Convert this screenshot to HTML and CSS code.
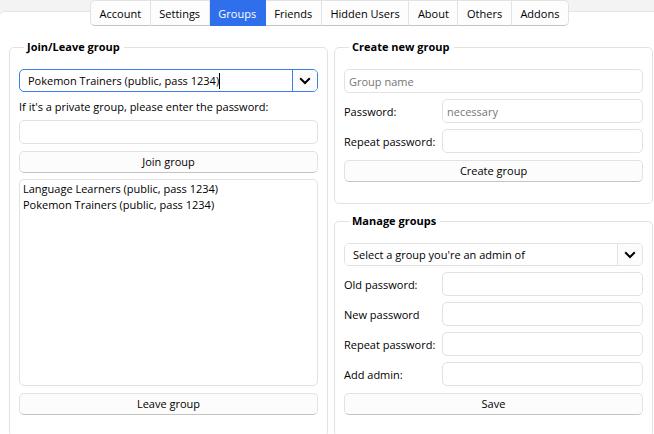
FILE: index.html
```html
<!DOCTYPE html>
<html lang="en">
<head>
<meta charset="utf-8">
<title>Groups</title>
<link rel="stylesheet" href="styles.css">
</head>
<body>
<nav class="tabs">
  <button class="tab" type="button">Account</button>
  <button class="tab" type="button">Settings</button>
  <button class="tab active" type="button">Groups</button>
  <button class="tab" type="button">Friends</button>
  <button class="tab" type="button">Hidden Users</button>
  <button class="tab" type="button">About</button>
  <button class="tab" type="button">Others</button>
  <button class="tab" type="button">Addons</button>
</nav>
<main class="pane">
  <fieldset class="group">
    <legend>Join/Leave group</legend>
    <div class="stack">
      <div class="combo focused">
        <div class="combo-text">
          <input class="combo-input" type="text" value="Pokemon Trainers (public, pass 1234)" aria-label="Group to join">
          <span class="caret"></span>
        </div>
        <button class="combo-arrow" type="button" aria-label="Show groups">
          <svg viewBox="0 0 12 8" width="12" height="8"><path d="M1.200 1.300 6 6l4.800-4.700"/></svg>
        </button>
      </div>
      <label for="join-pass">If it's a private group, please enter the password:</label>
      <input class="field" id="join-pass" type="text">
      <button class="push" type="button">Join group</button>
      <ul class="list">
        <li>Language Learners (public, pass 1234)</li>
        <li>Pokemon Trainers (public, pass 1234)</li>
      </ul>
      <button class="push" type="button">Leave group</button>
    </div>
  </fieldset>
  <div class="column">
    <fieldset class="group">
      <legend>Create new group</legend>
      <div class="form">
        <input class="field wide" type="text" placeholder="Group name" aria-label="Group name">
        <label for="new-pass">Password:</label>
        <input class="field" id="new-pass" type="text" placeholder="necessary">
        <label for="new-repeat">Repeat password:</label>
        <input class="field" id="new-repeat" type="text">
        <button class="push wide" type="button">Create group</button>
      </div>
    </fieldset>
    <fieldset class="group">
      <legend>Manage groups</legend>
      <div class="form">
        <div class="combo wide">
          <select class="combo-select" aria-label="Group to manage">
            <option>Select a group you're an admin of</option>
          </select>
          <span class="combo-arrow">
            <svg viewBox="0 0 12 8" width="12" height="8"><path d="M1.200 1.300 6 6l4.800-4.700"/></svg>
          </span>
        </div>
        <label for="old-pass">Old password:</label>
        <input class="field" id="old-pass" type="text">
        <label for="change-pass">New password</label>
        <input class="field" id="change-pass" type="text">
        <label for="change-repeat">Repeat password:</label>
        <input class="field" id="change-repeat" type="text">
        <label for="admin">Add admin:</label>
        <input class="field" id="admin" type="text">
        <button class="push wide" type="button">Save</button>
      </div>
    </fieldset>
  </div>
</main>
</body>
</html>
```
FILE: styles.css
```css
* { box-sizing: border-box; }

body {
  margin: 0;
  height: 100vh;
  overflow: hidden;
  background: linear-gradient(#f3f3f3 20px, #fff 20px);
  color: #000;
  font: 11px/16px "Open Sans", "Noto Sans", sans-serif;
}

button, input, select { font: inherit; color: inherit; margin: 0; }

/* Tab bar straddling the top edge of the pane */
.tabs {
  position: relative;
  z-index: 1;
  display: flex;
  width: 484px;
  max-width: 100%;
  margin: 0 auto -15px;
  padding-left: 5px;
}

.tab {
  flex: 1 1 auto;
  height: 26px;
  padding: 1px 8px 0;
  background: #fdfdfd;
  border: 1px solid #e2e2e2;
  border-left-width: 0;
  border-bottom-color: #c4c4c4;
}
.tab:first-child { border-left-width: 1px; border-radius: 5px 0 0 5px; }
.tab:last-child { border-radius: 0 5px 5px 0; }
.tab.active { background: #2f6feb; border-color: #2f6feb; color: #fff; }

.pane {
  display: grid;
  grid-template-columns: 1fr 1fr;
  gap: 6px;
  padding: 26px 1px 0 9px;
  background: #fff;
  border-top: 1px solid #e5e5e5;
  border-radius: 5px 0 0 0;
}

.column { display: flex; flex-direction: column; gap: 8px; }

.group {
  min-width: 0;
  margin: 0;
  padding: 13px 9px 21px;
  border: 1px solid #e2e2e2;
  border-radius: 5px;
}
.group legend {
  margin-left: 5px;
  padding: 0 4px 0 3px;
  font-weight: 700;
  line-height: 18px;
}

.stack { display: flex; flex-direction: column; gap: 6px; }
.form {
  display: grid;
  grid-template-columns: 92px 1fr;
  gap: 6px;
  align-items: center;
  white-space: nowrap;
}
.wide { grid-column: 1 / -1; }

label { height: 16px; line-height: 18px; }

.field {
  width: 100%;
  height: 24px;
  padding: 1px 4px 0;
  background: #fff;
  border: 1px solid #e2e2e2;
  border-radius: 5px;
}
.field::placeholder { color: #767676; opacity: 1; }

.push {
  height: 22px;
  margin-top: 1px;
  padding: 0;
  background: #fcfcfc;
  border: 1px solid #e2e2e2;
  border-bottom-color: #c4c4c4;
  border-radius: 5px;
}

.list {
  height: 207px;
  margin: 0;
  padding: 1px 3px;
  list-style: none;
  border: 1px solid #e2e2e2;
  border-radius: 5px;
}

.combo {
  display: flex;
  height: 23px;
  border: 1px solid #e2e2e2;
  border-radius: 5px;
  overflow: hidden;
}
.combo-text { display: flex; flex: 1; align-items: center; padding-left: 8px; }
.combo-input {
  field-sizing: content;
  padding: 0;
  border: 0;
  outline: 0;
  background: none;
}
.caret { width: 1px; height: 16px; background: #000; }
.combo-select {
  flex: 1;
  padding: 0 8px;
  border: 0;
  appearance: none;
  background: #fff;
}
.combo-arrow {
  display: grid;
  place-items: center;
  width: 25px;
  padding: 0;
  background: #fcfcfc;
  border: 0 solid #e2e2e2;
  border-left-width: 1px;
}
.combo-arrow svg { fill: none; stroke: #000; stroke-width: 2; }
.focused, .focused .combo-arrow { border-color: #3b7de9; }
```
